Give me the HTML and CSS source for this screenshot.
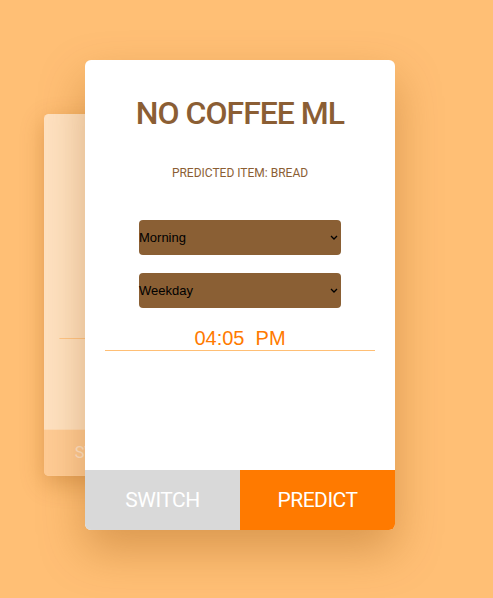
FILE: index.html
```html
<!DOCTYPE html>
<html>
<head>
<meta charset="utf-8">
<link rel="stylesheet" href="styles.css">
</head>
<body>
<div class="stage">
  <div class="card card-back">
    <div class="card-body">
      <div class="time-row back-time"></div>
    </div>
    <div class="actions">
      <div class="btn btn-back">SWITCH</div>
    </div>
  </div>
  <div class="card card-front">
    <div class="card-body">
      <h1 class="title">NO COFFEE ML</h1>
      <p class="result">PREDICTED ITEM: BREAD</p>
      <div class="select">
        <span>Morning</span>
        <svg class="chev" width="8" height="5" viewBox="0 0 8 5"><path d="M1 1 L4 4 L7 1" fill="none" stroke="#000" stroke-width="1.3"/></svg>
      </div>
      <div class="select">
        <span>Weekday</span>
        <svg class="chev" width="8" height="5" viewBox="0 0 8 5"><path d="M1 1 L4 4 L7 1" fill="none" stroke="#000" stroke-width="1.3"/></svg>
      </div>
      <div class="time-row"><span class="time">04:05&nbsp;&nbsp;PM</span></div>
    </div>
    <div class="actions">
      <div class="btn btn-switch">SWITCH</div>
      <div class="btn btn-predict">PREDICT</div>
    </div>
  </div>
</div>
</body>
</html>
```
FILE: styles.css
```css
html, body {
  margin: 0;
  padding: 0;
  background: #ffbf75;
  width: 493px;
  height: 598px;
  overflow: hidden;
}
.stage {
  position: relative;
  padding: 60px 0 0 85px;
}
.card {
  width: 310px;
  height: 470px;
  border-radius: 6px;
  display: flex;
  flex-direction: column;
  overflow: hidden;
}
.card-front {
  position: relative;
  background: #fff;
  box-shadow: 0 20px 45px rgba(150, 80, 10, 0.35);
}
.card-back {
  position: absolute;
  left: 85px;
  top: 60px;
  transform-origin: 0 0;
  transform: translate(-41px, 54px) scale(0.77);
  background: rgba(255, 255, 255, 0.55);
  box-shadow: 0 10px 30px rgba(150, 80, 10, 0.3);
}
.card-body {
  flex: 1;
  display: flex;
  flex-direction: column;
  align-items: center;
  padding: 0 20px;
}
.title {
  margin: 33px 0 0;
  font-family: Roboto, sans-serif;
  font-weight: 500;
  font-size: 32px;
  line-height: 40px;
  color: #8b5e34;
  letter-spacing: -1px;
}
.result {
  margin: 33px 0 0;
  font-family: Roboto, sans-serif;
  font-size: 12px;
  line-height: 14px;
  color: #8b5e34;
}
.select {
  width: 202px;
  height: 35px;
  box-sizing: border-box;
  background: #8a5f34;
  border-radius: 4px;
  display: flex;
  align-items: center;
  justify-content: space-between;
  padding: 0 3px 0 0;
  font-family: "Liberation Sans", sans-serif;
  font-size: 13px;
  color: #000;
  margin-top: 18px;
}
.result + .select {
  margin-top: 40px;
}
.chev {
  display: block;
}
.time-row {
  align-self: stretch;
  margin-top: 18px;
  border-bottom: 1px solid #ffbf75;
  text-align: center;
  height: 24px;
}
.time {
  font-family: "Liberation Sans", sans-serif;
  font-size: 20px;
  line-height: 24px;
  color: #ff7a00;
}
.back-time {
  margin-top: 267px;
}
.actions {
  height: 60px;
  display: flex;
}
.btn {
  flex: 1;
  display: flex;
  align-items: center;
  justify-content: center;
  font-family: Roboto, sans-serif;
  font-size: 21px;
  letter-spacing: -0.5px;
  color: #fff;
}
.btn-switch {
  background: #d9d9d9;
}
.btn-predict {
  background: #ff7a00;
}
.btn-back {
  background: rgba(255, 190, 120, 0.6);
  color: rgba(255, 255, 255, 0.5);
  justify-content: flex-start;
  padding-left: 40px;
}
```
